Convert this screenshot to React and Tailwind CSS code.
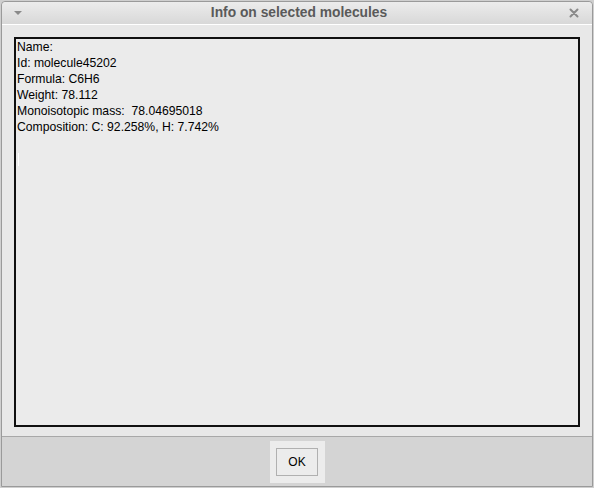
export default function App() {
  const lines = [
    'Name:',
    'Id: molecule45202',
    'Formula: C6H6',
    'Weight: 78.112',
    'Monoisotopic mass:  78.04695018',
    'Composition: C: 92.258%, H: 7.742%',
  ]

  return (
    <div className="w-[594px] h-[488px] bg-[#cfcfcf] p-[1px] overflow-hidden" style={{ fontFamily: '"Liberation Sans", Arial, sans-serif' }}>
      <div className="w-full h-full flex flex-col border border-[#9a9a9a] rounded-t-[4px] bg-[#e8e8e8]">
        {/* Title bar */}
        <div className="h-[23px] shrink-0 flex items-center px-[10px] bg-gradient-to-b from-[#ececec] to-[#d8d8d8] border-b border-white rounded-t-[4px]">
          <svg width="12" height="12" viewBox="0 0 12 12" className="shrink-0">
            <path d="M2 4 L10 4 L6 8 Z" fill="#8a8a8a" />
          </svg>
          <div className="flex-1 text-center text-[13.8px] font-bold text-[#5a5a5a] pl-[6px]">Info on selected molecules</div>
          <svg width="12" height="12" viewBox="0 0 12 12" className="shrink-0 mr-[2px]">
            <path d="M2.5 2.5 L9.5 9.5 M9.5 2.5 L2.5 9.5" stroke="#8a8a8a" strokeWidth="2" strokeLinecap="round" />
          </svg>
        </div>

        {/* Content */}
        <div className="flex-1 flex flex-col px-[12px] pt-[12px] pb-[9px]">
          <div className="flex-1 border-2 border-[#101010] bg-[#ebebeb] px-[1px] text-[12.2px] leading-[16px] text-black">
            {lines.map((l, i) => (
              <div key={i} className="whitespace-pre">{l}</div>
            ))}
            <div className="h-[16px]" />
            <div className="w-[1px] h-[13px] bg-white ml-[1px] mt-[2px]" />
          </div>
        </div>

        {/* Button panel */}
        <div className="h-[50px] shrink-0 flex items-center justify-center border-t border-[#a8a8a8] bg-[#d4d4d4]">
          <div className="w-[55px] h-[42px] bg-[#ececec] flex items-center justify-center">
            <button className="w-[42px] h-[28px] border border-[#b0b0b0] bg-[#ececec] text-[12px] text-black">OK</button>
          </div>
        </div>
      </div>
    </div>
  )
}
